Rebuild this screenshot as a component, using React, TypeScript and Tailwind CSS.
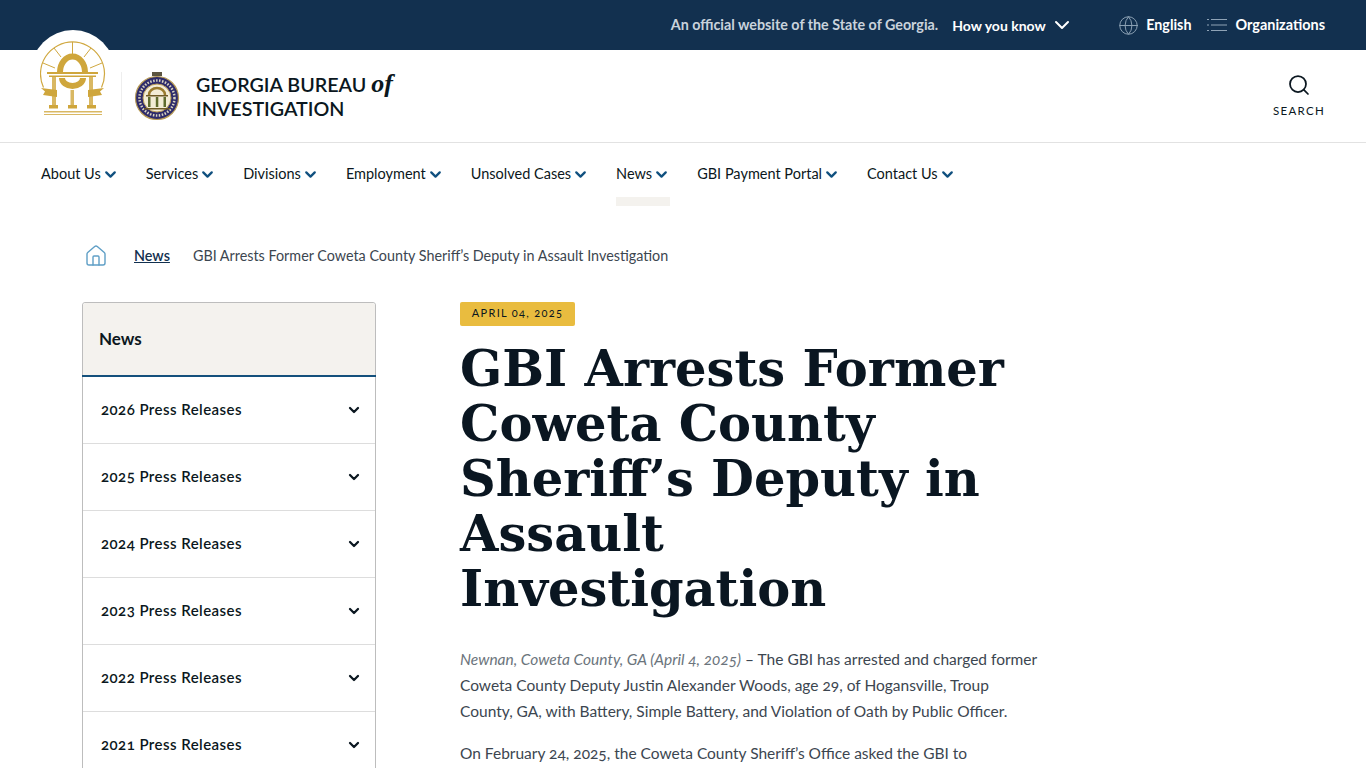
import { ChevronDown, Globe, Home, Search } from "lucide-react";

const navItems = ["About Us", "Services", "Divisions", "Employment", "Unsolved Cases", "News", "GBI Payment Portal", "Contact Us"];
const years = ["2026", "2025", "2024", "2023", "2022", "2021"];

const StateSeal = () => (
  <svg viewBox="0 0 66 76" className="w-[66px] h-[76px]" fill="none">
    <path d="M3.5 46.5 A32 32 0 1 1 61.5 46.5" stroke="#d0a840" strokeWidth="1.2" />
    <path d="M14 7 L21 16 M32.5 1 V13 M51 7 L44 16 M3 22 L15 27 M62 22 L50 27" stroke="#d0a840" strokeWidth="1" />
    <path d="M20 31 A12.5 15.5 0 0 1 45 31" stroke="#cfa63c" strokeWidth="6" />
    <path d="M22 37 A10.5 8 0 0 0 43 37" stroke="#cfa63c" strokeWidth="6" />
    <rect x="7" y="31" width="51" height="2" fill="#cfa63c" />
    <rect x="9" y="34.5" width="47" height="1.5" fill="#cfa63c" />
    <rect x="12" y="36" width="4" height="28" fill="#d9b863" />
    <rect x="30.5" y="49" width="3.5" height="15" fill="#d9b863" />
    <rect x="49" y="36" width="4" height="28" fill="#d9b863" />
    <path d="M1 47 L17 49 V56 L3 54 L5 50.5 Z M64 47 L48 49 V56 L62 54 L60 50.5 Z" fill="#cfa63c" />
    <rect x="9" y="64" width="9" height="3.5" fill="#cfa63c" />
    <rect x="28" y="64" width="9" height="3.5" fill="#cfa63c" />
    <rect x="47" y="64" width="9" height="3.5" fill="#cfa63c" />
    <rect x="4" y="70" width="58" height="1.5" fill="#d9b863" />
    <rect x="4" y="73" width="58" height="1" fill="#d9b863" />
  </svg>
);

const GbiBadge = () => (
  <svg viewBox="0 0 46 50" className="w-[46px] h-[50px]" fill="none">
    <rect x="18" y="1" width="10" height="4" fill="#5b5440" />
    <circle cx="23" cy="27" r="21.5" fill="#2e2b6b" stroke="#b79a55" strokeWidth="1.2" />
    <circle cx="23" cy="27" r="17.5" stroke="#d8d3c0" strokeWidth="2.5" strokeDasharray="1.5 1.5" />
    <circle cx="23" cy="27" r="14" fill="#f3ecd6" stroke="#b79a55" />
    <path d="M15 24 A8 7 0 0 1 31 24" stroke="#9a7b2e" strokeWidth="2.5" />
    <rect x="12" y="24" width="22" height="1.5" fill="#6e5a26" />
    <path d="M14 26h2.5v10H14zM21.8 26h2.5v10h-2.5zM29.5 26h2.5v10h-2.5z" fill="#5f6b2d" />
    <path d="M10 37h26v1.5H10z" fill="#6e5a26" />
  </svg>
);

const OrgIcon = () => (
  <svg viewBox="0 0 20 14" className="w-[20px] h-[14px]" fill="none" stroke="#8fa3b6" strokeWidth="1">
    <path d="M0 1.5h2M4 1.5h16M0 7h2M4 7h16M0 12.5h2M4 12.5h16" />
  </svg>
);

export default function App() {
  return (
    <div className="relative h-[768px] overflow-hidden bg-white font-['Lato',sans-serif] text-[#0b1720]">
      {/* top bar */}
      <div className="h-[50px] bg-[#12304f] flex items-center justify-end pr-[41px] text-[14.3px] font-bold text-white">
        <span className="text-[#c9d3dc]">An official website of the State of Georgia.</span>
        <span className="ml-[14px] text-[14px]">How you know</span>
        <ChevronDown className="ml-[4px] w-[24px] h-[24px]" strokeWidth={2} />
        <Globe className="ml-[44.5px] w-[21px] h-[21px] text-[#8fa3b6]" strokeWidth={1.1} />
        <span className="ml-[7px]">English</span>
        <span className="ml-[16px]"><OrgIcon /></span>
        <span className="ml-[8px] text-[14.45px]">Organizations</span>
      </div>

      {/* logo */}
      <div className="absolute left-[31px] top-[30px] w-[84px] h-[84px] rounded-full bg-white flex justify-center pt-[11px]">
        <StateSeal />
      </div>

      {/* header */}
      <header className="h-[93px] border-b border-[#e2e2e2] flex items-center pl-[121px] pr-[41px]">
        <div className="w-px h-[48px] bg-[#eeeeee]" />
        <div className="ml-[12px]"><GbiBadge /></div>
        <div className="ml-[16px] text-[19.7px] leading-[24px] font-semibold">
          GEORGIA BUREAU <span className="font-['Liberation_Serif',serif] italic font-bold text-[26px]">of</span>
          <br />
          INVESTIGATION
        </div>
        <div className="ml-auto flex flex-col items-center">
          <Search className="w-[24px] h-[24px]" strokeWidth={1.75} />
          <span className="mt-[5px] text-[11.5px] tracking-[1.3px]">SEARCH</span>
        </div>
      </header>

      {/* nav */}
      <nav className="h-[63px] flex items-start pl-[41px] gap-[27px] text-[14.5px]">
        {navItems.map((item) => (
          <div key={item} className="relative h-[63px] pt-[21px] flex items-start">
            <span className="leading-[20px]">{item}</span>
            <ChevronDown className="ml-[1px] mt-[2px] w-[17px] h-[17px] text-[#10507f]" strokeWidth={3.2} />
            {item === "News" && <div className="absolute left-0 right-0 bottom-0 h-[9px] bg-[#f4f2ee]" />}
          </div>
        ))}
      </nav>

      <div className="pl-[82px]">
        {/* breadcrumb */}
        <div className="mt-[38px] h-[24px] flex items-center text-[14.35px] text-[#3c4650]">
          <Home className="ml-[2px] w-[24px] h-[24px] text-[#5f9fc6]" strokeWidth={1.4} />
          <span className="ml-[26px] font-semibold underline text-[#12304f]">News</span>
          <span className="ml-[23px]">GBI Arrests Former Coweta County Sheriff’s Deputy in Assault Investigation</span>
        </div>

        <div className="mt-[34px] flex items-start">
          {/* sidebar */}
          <aside className="w-[294px] shrink-0 border border-[#bdbdbd] rounded-t-[3px]">
            <div className="h-[72px] bg-[#f4f2ee] flex items-center pl-[16px] text-[17px] font-bold rounded-t-[3px]">News</div>
            <div className="h-[2px] -mx-px bg-[#14507c]" />
            {years.map((year) => (
              <div key={year} className="h-[67px] border-b border-[#dddddd] flex items-center justify-between pl-[18px] pr-[13px] text-[15px] font-semibold tracking-[0.45px]">
                <span className="-mt-[2px] oldstyle-nums">{year} Press Releases</span>
                <ChevronDown className="w-[16px] h-[16px]" strokeWidth={3.4} />
              </div>
            ))}
          </aside>

          {/* article */}
          <main className="ml-[84px] w-[580px]">
            <div className="w-[115px] h-[24px] text-center bg-[#e9bc3f] rounded-[2px] text-[11px] leading-[22px] font-normal tracking-[1.3px] oldstyle-nums">APRIL 04, 2025</div>
            <h1 className="mt-[16px] font-['DejaVu_Serif',serif] font-bold text-[49.5px] leading-[55px] text-[#0a1621]">
              GBI Arrests Former Coweta County Sheriff’s Deputy in Assault Investigation
            </h1>
            <p className="mt-[29px] text-[15.5px] leading-[26px] text-[#3c4650] oldstyle-nums">
              <em className="text-[#6b747c]">Newnan, Coweta County, GA (April 4, 2025)</em> – The GBI has arrested and charged former Coweta County Deputy Justin Alexander Woods, age 29, of Hogansville, Troup County, GA, with Battery, Simple Battery, and Violation of Oath by Public Officer.
            </p>
            <p className="mt-[16px] text-[15.5px] leading-[26px] text-[#3c4650] oldstyle-nums">
              On February 24, 2025, the Coweta County Sheriff’s Office asked the GBI to
            </p>
          </main>
        </div>
      </div>
    </div>
  );
}
